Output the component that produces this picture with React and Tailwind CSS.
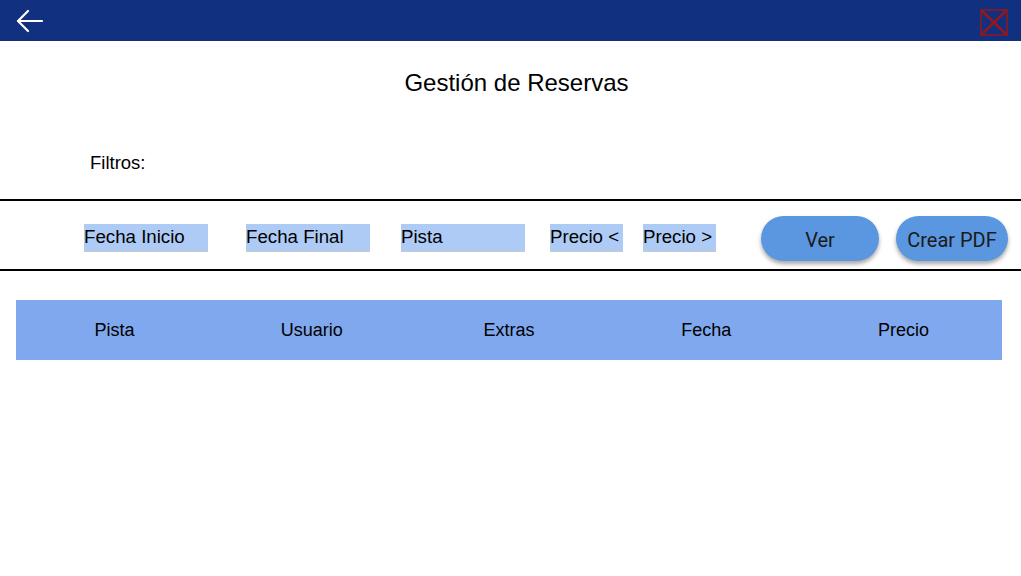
import React from 'react';

const filters = [
    { label: 'Fecha Inicio', w: 'w-[124px]', ml: 'ml-[84px]' },
    { label: 'Fecha Final', w: 'w-[124px]', ml: 'ml-[38px]' },
    { label: 'Pista', w: 'w-[124px]', ml: 'ml-[31px]' },
    { label: 'Precio <', w: 'w-[73px]', ml: 'ml-[25px]' },
    { label: 'Precio >', w: 'w-[73px]', ml: 'ml-[20px]' },
];

const columns = ['Pista', 'Usuario', 'Extras', 'Fecha', 'Precio'];

const App = () => {
    return (
        <div className="w-[1021px] h-[576px] bg-white overflow-hidden font-['Liberation_Sans',Arial,sans-serif] text-black">
            {/* Top bar */}
            <div className="h-[41px] bg-[#11307f] flex items-center justify-between pl-[16px] pr-[13px]">
                <svg width="28" height="24" viewBox="0 0 28 24" fill="none" stroke="white" strokeWidth="2.2" strokeLinecap="round" strokeLinejoin="round">
                    <path d="M26 12H2" />
                    <path d="M12 2L2 12l10 10" />
                </svg>
                <svg className="mt-[4px]" width="28" height="28" viewBox="0 0 28 28" fill="none" stroke="#8e1a1d" strokeWidth="1.6">
                    <rect x="1" y="1" width="26" height="25" />
                    <path d="M1 1l26 25M27 1L1 26" strokeWidth="2.6" />
                </svg>
            </div>

            {/* Title */}
            <div className="pt-[28px] pl-[12px] text-center text-[24px] leading-[28px]">Gestión de Reservas</div>

            {/* Filters label */}
            <div className="mt-[55px] ml-[90px] text-[18.5px] leading-[22px]">Filtros:</div>

            {/* Filter bar */}
            <div className="mt-[25px] h-[72px] border-y-2 border-black flex items-start">
                {filters.map((f) => (
                    <div
                        key={f.label}
                        className={`${f.ml} ${f.w} mt-[23px] h-[28px] bg-[#aecbf5] border-b border-[#c9c9c9] text-[18.7px] leading-[26px] whitespace-nowrap`}
                    >
                        {f.label}
                    </div>
                ))}
                <button className="ml-[45px] mt-[15px] w-[118px] h-[45px] rounded-full bg-[#5b96e0] shadow-[0_3px_4px_rgba(0,0,0,0.35)] font-['Roboto',sans-serif] text-[20px] text-[#1a1a1a] pt-[2px]">
                    Ver
                </button>
                <button className="ml-[17px] mt-[15px] w-[112px] h-[45px] rounded-full bg-[#5b96e0] shadow-[0_3px_4px_rgba(0,0,0,0.35)] font-['Roboto',sans-serif] text-[20px] text-[#1a1a1a] pt-[2px] whitespace-nowrap">
                    Crear PDF
                </button>
            </div>

            {/* Table header */}
            <div className="mt-[29px] ml-[16px] w-[986px] h-[60px] bg-[#80a8ee] grid grid-cols-5 items-center text-center text-[18px]">
                {columns.map((c) => (
                    <div key={c}>{c}</div>
                ))}
            </div>
        </div>
    );
};

export default App;
